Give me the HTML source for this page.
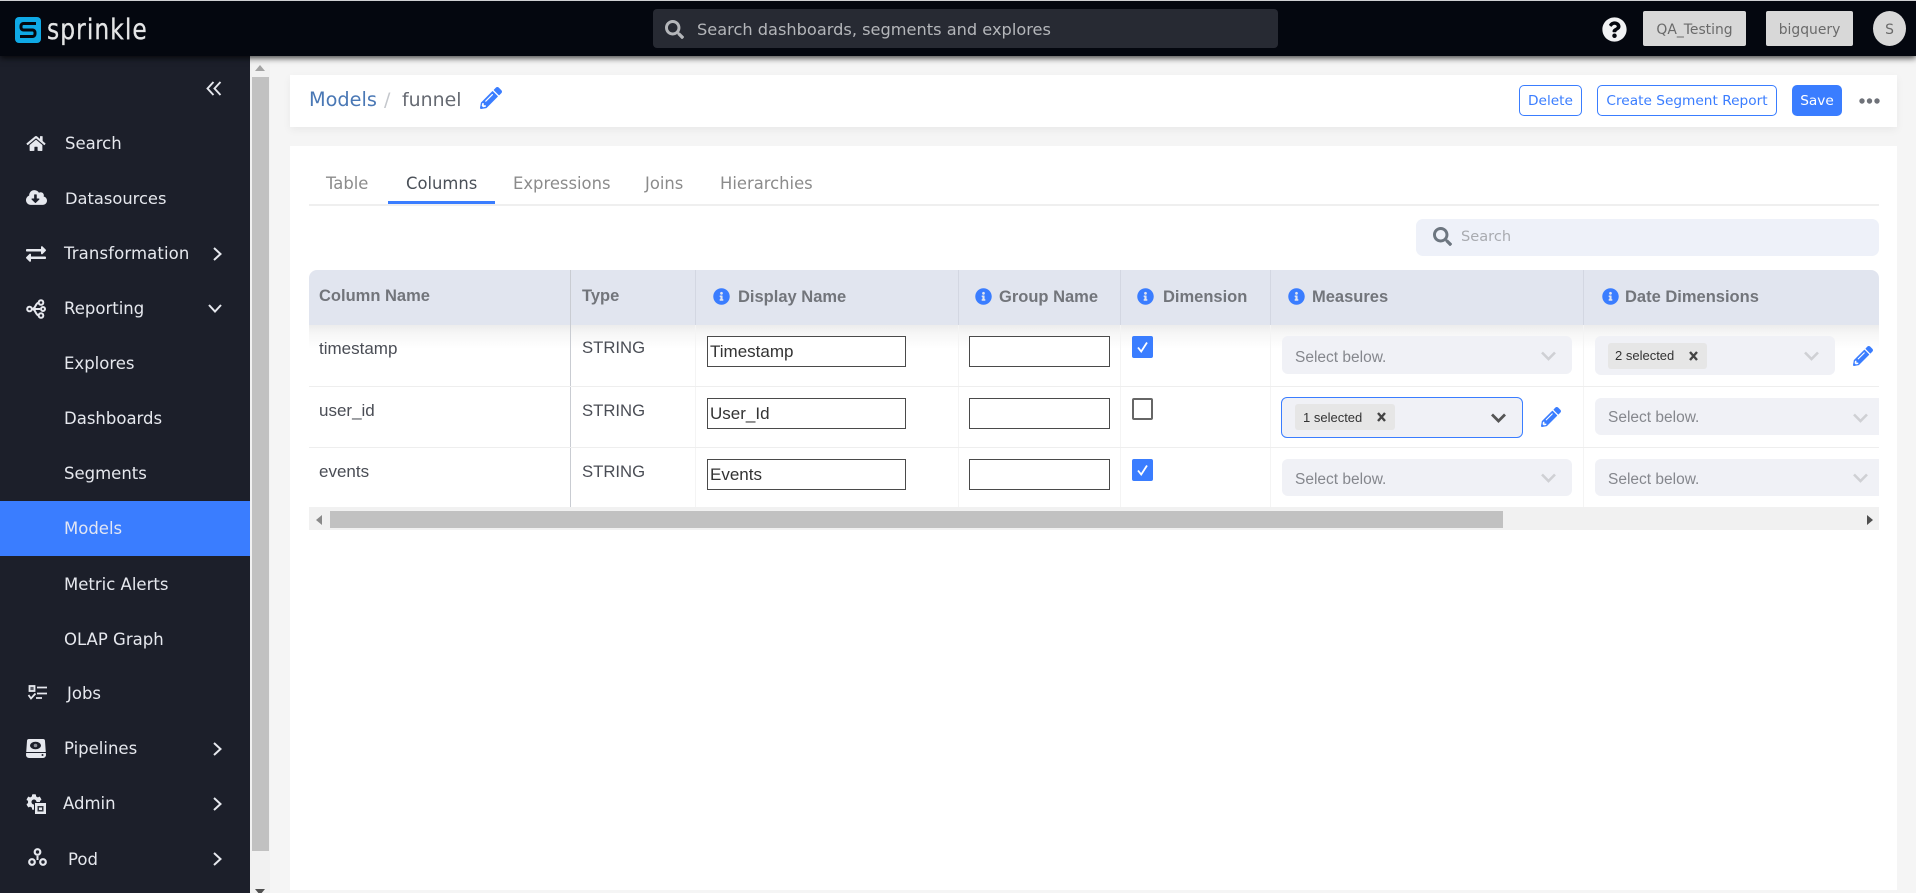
<!DOCTYPE html>
<html lang="en"><head><meta charset="utf-8"><title>Sprinkle - Models</title>
<style>
*{box-sizing:border-box}
html,body{margin:0;padding:0;width:1916px;height:893px;overflow:hidden;background:#f5f5f5;font-family:"Liberation Sans",sans-serif}
.a{position:absolute}
.t{position:absolute;white-space:nowrap;line-height:24px;height:24px}
.d{font-family:"DejaVu Sans",sans-serif}
svg{position:absolute;display:block;overflow:visible}
.nav{color:#e6e8ee;font-size:16.5px;font-family:"DejaVu Sans",sans-serif}
.th{font-weight:bold;font-size:16.5px;color:#72757b}
.td{font-size:17px;color:#4a4d55}
.in{position:absolute;width:199px;height:31px;background:#fff;border:1.5px solid #4a4a4a;font-size:17px;color:#333;line-height:30px;padding-left:2px;white-space:nowrap}
.sel{position:absolute;background:#f0f1f6;border-radius:6px}
.ph{font-size:15.5px;color:#85878d}
.chip{position:absolute;background:#e6e6e6;border-radius:3px;height:26px;font-size:13px;color:#333;line-height:26px;white-space:nowrap}
.btn{position:absolute;height:31px;border:1px solid #3a7dff;border-radius:5px;color:#3a7dff;font-family:"DejaVu Sans",sans-serif;font-size:13.7px;line-height:31px;text-align:center;background:#fff;white-space:nowrap}
.gbtn{position:absolute;top:11px;height:35px;background:#d8d8d8;border-radius:2px;color:#6a6a6a;font-family:"DejaVu Sans",sans-serif;font-size:13.9px;line-height:38px;text-align:center}
.tab{font-family:"DejaVu Sans",sans-serif;font-size:16.4px;color:#8b8b8b}
</style></head><body>

<svg width="0" height="0" style="position:absolute"><defs>
<path id="pen" d="M497.9 142.1l-46.1 46.1c-4.7 4.7-12.3 4.7-17 0l-111-111c-4.7-4.7-4.7-12.3 0-17l46.1-46.1c18.7-18.7 49.1-18.7 67.9 0l60.1 60.1c18.8 18.7 18.8 49.1 0 67.9zM284.2 99.8L21.6 362.4.4 483.9c-2.9 16.4 11.4 30.6 27.8 27.8l121.5-21.3 262.6-262.6c4.7-4.7 4.7-12.3 0-17l-111-111c-4.8-4.7-12.4-4.7-17.1 0zM124.1 339.9c-5.5-5.5-5.5-14.3 0-19.8l154-154c5.5-5.5 14.3-5.5 19.8 0s5.5 14.3 0 19.8l-154 154c-5.5 5.5-14.3 5.5-19.8 0zM88 424h48v36.3l-64.5 11.3-31.1-31.1L51.7 376H88v48z"/>
<path id="info" d="M256 8C119 8 8 119.1 8 256c0 137 111 248 248 248s248-111 248-248C504 119.1 393 8 256 8zm0 110c23.2 0 42 18.8 42 42s-18.8 42-42 42-42-18.8-42-42 18.8-42 42-42zm56 254c0 6.6-5.4 12-12 12h-88c-6.6 0-12-5.4-12-12v-24c0-6.6 5.4-12 12-12h12v-64h-12c-6.6 0-12-5.4-12-12v-24c0-6.6 5.4-12 12-12h64c6.6 0 12 5.4 12 12v100h12c6.6 0 12 5.4 12 12v24z"/>
<path id="srch" d="M505 442.7L405.3 343c-4.5-4.5-10.6-7-17-7H372c27.6-35.3 44-79.7 44-128C416 93.1 322.9 0 208 0S0 93.1 0 208s93.1 208 208 208c48.3 0 92.7-16.4 128-44v16.3c0 6.4 2.5 12.5 7 17l99.7 99.7c9.4 9.4 24.6 9.4 33.9 0l28.3-28.3c9.4-9.4 9.4-24.6.1-34zM208 336c-70.7 0-128-57.2-128-128 0-70.7 57.2-128 128-128 70.7 0 128 57.2 128 128 0 70.7-57.2 128-128 128z"/>
</defs></svg>

<!-- main content -->
<div class="a" style="left:290px;top:75px;width:1607px;height:52px;background:#fff;box-shadow:0 3px 8px rgba(0,0,0,.05)"></div>
<div class="t d" style="left:309px;top:88px;font-size:19.3px;color:#4a78b5">Models</div>
<div class="t d" style="left:384px;top:88px;font-size:19px;color:#c4c7cc">/</div>
<div class="t d" style="left:402px;top:88px;font-size:18.9px;color:#666a72">funnel</div>
<svg style="left:480px;top:87px" width="22" height="22" viewBox="0 0 512 512" fill="#3a7dff"><use href="#pen"/></svg>

<div class="btn" style="left:1519px;top:85px;width:63px">Delete</div>
<div class="btn" style="left:1597px;top:85px;width:180px">Create Segment Report</div>
<div class="btn" style="left:1792px;top:85px;width:50px;background:#3a7dff;color:#fff">Save</div>
<svg style="left:1859px;top:97px" width="21" height="8" fill="#6f7279"><circle cx="3" cy="4" r="2.7"/><circle cx="10.5" cy="4" r="2.7"/><circle cx="18" cy="4" r="2.7"/></svg>

<div class="a" style="left:290px;top:146px;width:1607px;height:744px;background:#fff"></div>

<div class="t tab" style="left:326px;top:172px">Table</div>
<div class="t tab" style="left:406px;top:172px;color:#4a5058">Columns</div>
<div class="t tab" style="left:513px;top:172px">Expressions</div>
<div class="t tab" style="left:645px;top:172px">Joins</div>
<div class="t tab" style="left:720px;top:172px">Hierarchies</div>
<div class="a" style="left:309px;top:204px;width:1570px;height:2px;background:#efefef"></div>
<div class="a" style="left:388px;top:201px;width:107px;height:3px;background:#3a7dff"></div>

<div class="a" style="left:1416px;top:219px;width:463px;height:37px;background:#eef1f9;border-radius:7px"></div>
<svg style="left:1433px;top:227px" width="19" height="19" viewBox="0 0 512 512" fill="#6d7680"><use href="#srch"/></svg>
<div class="t d" style="left:1461px;top:225px;font-size:14.6px;color:#a9abb0">Search</div>

<!-- table header -->
<div class="a" style="left:309px;top:270px;width:1570px;height:55px;background:#e1e5ef;border-radius:8px 8px 0 0"></div>
<div class="a" style="left:309px;top:325px;width:1570px;height:182px;background:linear-gradient(#ececec 0,#f6f6f6 8px,#ffffff 24px)"></div>

<div class="a" style="left:570px;top:270px;width:1px;height:237px;background:#c9ccd2"></div>
<div class="a" style="left:695px;top:270px;width:1px;height:55px;background:#d3d7e2"></div>
<div class="a" style="left:958px;top:270px;width:1px;height:55px;background:#d3d7e2"></div>
<div class="a" style="left:1120px;top:270px;width:1px;height:55px;background:#d3d7e2"></div>
<div class="a" style="left:1270px;top:270px;width:1px;height:55px;background:#d3d7e2"></div>
<div class="a" style="left:1583px;top:270px;width:1px;height:55px;background:#d3d7e2"></div>
<div class="a" style="left:695px;top:325px;width:1px;height:182px;background:#f4f4f4"></div>
<div class="a" style="left:958px;top:325px;width:1px;height:182px;background:#f4f4f4"></div>
<div class="a" style="left:1120px;top:325px;width:1px;height:182px;background:#f4f4f4"></div>
<div class="a" style="left:1270px;top:325px;width:1px;height:182px;background:#f4f4f4"></div>
<div class="a" style="left:1583px;top:325px;width:1px;height:182px;background:#f4f4f4"></div>
<div class="a" style="left:309px;top:386px;width:1570px;height:1px;background:#eeeeee"></div>
<div class="a" style="left:309px;top:447px;width:1570px;height:1px;background:#eeeeee"></div>

<div class="t th" style="left:319px;top:284px">Column Name</div>
<div class="t th" style="left:582px;top:284px">Type</div>
<svg style="left:713px;top:288px" width="17" height="17" viewBox="0 0 512 512" fill="#3a7dff"><use href="#info"/></svg>
<div class="t th" style="left:738px;top:285px">Display Name</div>
<svg style="left:975px;top:288px" width="17" height="17" viewBox="0 0 512 512" fill="#3a7dff"><use href="#info"/></svg>
<div class="t th" style="left:999px;top:285px">Group Name</div>
<svg style="left:1137px;top:288px" width="17" height="17" viewBox="0 0 512 512" fill="#3a7dff"><use href="#info"/></svg>
<div class="t th" style="left:1163px;top:285px">Dimension</div>
<svg style="left:1288px;top:288px" width="17" height="17" viewBox="0 0 512 512" fill="#3a7dff"><use href="#info"/></svg>
<div class="t th" style="left:1312px;top:285px">Measures</div>
<svg style="left:1602px;top:288px" width="17" height="17" viewBox="0 0 512 512" fill="#3a7dff"><use href="#info"/></svg>
<div class="t th" style="left:1625px;top:285px">Date Dimensions</div>

<!-- rows -->
<div class="t td" style="left:319px;top:337px">timestamp</div>
<div class="t td" style="left:582px;top:336px;font-size:16.7px">STRING</div>
<div class="in" style="left:707px;top:336px">Timestamp</div>
<div class="in" style="left:969px;top:336px;width:141px"></div>
<div class="a" style="left:1132px;top:336px;width:21px;height:22px;background:#3a7dff;border-radius:2px"></div>
<svg style="left:1132px;top:336px" width="21" height="22" fill="none" stroke="#fff" stroke-width="1.8"><path d="M6 11.5l3.2 4L15 6.5"/></svg>

<div class="t td" style="left:319px;top:399px">user_id</div>
<div class="t td" style="left:582px;top:399px;font-size:16.7px">STRING</div>
<div class="in" style="left:707px;top:398px">User_Id</div>
<div class="in" style="left:969px;top:398px;width:141px"></div>
<div class="a" style="left:1132px;top:398px;width:21px;height:22px;background:#fff;border:2px solid #666;border-radius:2px"></div>

<div class="t td" style="left:319px;top:460px">events</div>
<div class="t td" style="left:582px;top:460px;font-size:16.7px">STRING</div>
<div class="in" style="left:707px;top:459px">Events</div>
<div class="in" style="left:969px;top:459px;width:141px"></div>
<div class="a" style="left:1132px;top:459px;width:21px;height:22px;background:#3a7dff;border-radius:2px"></div>
<svg style="left:1132px;top:459px" width="21" height="22" fill="none" stroke="#fff" stroke-width="1.8"><path d="M6 11.5l3.2 4L15 6.5"/></svg>

<!-- measures selects -->
<div class="sel" style="left:1282px;top:336px;width:290px;height:38px"></div>
<div class="t ph" style="left:1295px;top:346px">Select below.</div>
<svg style="left:1541px;top:351px" width="15" height="10" fill="none" stroke="#cfd0d4" stroke-width="2.6"><path d="M1 1.5l6.5 6.5L14 1.5"/></svg>

<div class="sel" style="left:1281px;top:397px;width:242px;height:41px;border:1.5px solid #3a7dff"></div>
<div class="chip" style="left:1295px;top:404px;width:100px;padding-left:8px;line-height:28px">1 selected</div>
<svg style="left:1377px;top:412px" width="9" height="10" fill="none" stroke="#444" stroke-width="2.4"><path d="M1 1l7 8M8 1L1 9"/></svg>
<svg style="left:1491px;top:413px" width="15" height="10" fill="none" stroke="#555" stroke-width="2.8"><path d="M1 1.5l6.5 6.5L14 1.5"/></svg>
<svg style="left:1541px;top:407px" width="20" height="20" viewBox="0 0 512 512" fill="#3a7dff"><use href="#pen"/></svg>

<div class="sel" style="left:1282px;top:459px;width:290px;height:37px"></div>
<div class="t ph" style="left:1295px;top:468px">Select below.</div>
<svg style="left:1541px;top:473px" width="15" height="10" fill="none" stroke="#cfd0d4" stroke-width="2.6"><path d="M1 1.5l6.5 6.5L14 1.5"/></svg>

<!-- date selects -->
<div class="sel" style="left:1595px;top:336px;width:240px;height:39px"></div>
<div class="chip" style="left:1608px;top:343px;width:99px;padding-left:7px">2 selected</div>
<svg style="left:1689px;top:351px" width="9" height="10" fill="none" stroke="#444" stroke-width="2.4"><path d="M1 1l7 8M8 1L1 9"/></svg>
<svg style="left:1804px;top:351px" width="15" height="10" fill="none" stroke="#cfd0d4" stroke-width="2.6"><path d="M1 1.5l6.5 6.5L14 1.5"/></svg>
<svg style="left:1853px;top:346px" width="20" height="20" viewBox="0 0 512 512" fill="#3a7dff"><use href="#pen"/></svg>

<div class="sel" style="left:1595px;top:398px;width:284px;height:37px;border-radius:6px 0 0 6px"></div>
<div class="t ph" style="left:1608px;top:406px">Select below.</div>
<svg style="left:1853px;top:413px" width="15" height="10" fill="none" stroke="#cfd0d4" stroke-width="2.6"><path d="M1 1.5l6.5 6.5L14 1.5"/></svg>

<div class="sel" style="left:1595px;top:459px;width:284px;height:37px;border-radius:6px 0 0 6px"></div>
<div class="t ph" style="left:1608px;top:468px">Select below.</div>
<svg style="left:1853px;top:473px" width="15" height="10" fill="none" stroke="#cfd0d4" stroke-width="2.6"><path d="M1 1.5l6.5 6.5L14 1.5"/></svg>

<!-- h scrollbar -->
<div class="a" style="left:309px;top:507px;width:1570px;height:23px;background:#f1f1f1"></div>
<div class="a" style="left:330px;top:511px;width:1173px;height:17px;background:#c1c1c1"></div>
<svg style="left:316px;top:515px" width="7" height="10" fill="#8a8a8a"><path d="M6 0v10L0 5z"/></svg>
<svg style="left:1866px;top:515px" width="7" height="10" fill="#505050"><path d="M1 0v10L7 5z"/></svg>

<!-- v scrollbar -->
<div class="a" style="left:250px;top:56px;width:20px;height:837px;background:#f1f1f1"></div>
<div class="a" style="left:252px;top:77px;width:17px;height:774px;background:#c1c1c1"></div>
<svg style="left:255px;top:65px" width="10" height="6" fill="#a3a3a3"><path d="M5 0l5 6H0z"/></svg>
<svg style="left:255px;top:889px" width="10" height="4" fill="#505050"><path d="M0 0h10L5 6z"/></svg>

<!-- sidebar -->
<div class="a" style="left:0;top:56px;width:250px;height:837px;background:#1c1f2a"></div>
<div class="a" style="left:0;top:501px;width:250px;height:55px;background:#3a7dff"></div>
<svg style="left:206px;top:81px" width="16" height="15" fill="none" stroke="#e6e8ee" stroke-width="1.9"><path d="M7.5 1L1.5 7.5l6 6.5M14.5 1L8.5 7.5l6 6.5"/></svg>

<div class="t nav" style="left:65px;top:132px">Search</div>
<div class="t nav" style="left:65px;top:187px;font-size:16.3px">Datasources</div>
<div class="t nav" style="left:64px;top:242px;letter-spacing:.12px">Transformation</div>
<div class="t nav" style="left:64px;top:297px">Reporting</div>
<div class="t nav" style="left:64px;top:352px">Explores</div>
<div class="t nav" style="left:64px;top:407px">Dashboards</div>
<div class="t nav" style="left:64px;top:462px">Segments</div>
<div class="t nav" style="left:64px;top:517px;color:#e2e6f4">Models</div>
<div class="t nav" style="left:64px;top:573px">Metric Alerts</div>
<div class="t nav" style="left:64px;top:628px">OLAP Graph</div>
<div class="t nav" style="left:67px;top:682px">Jobs</div>
<div class="t nav" style="left:64px;top:737px">Pipelines</div>
<div class="t nav" style="left:63px;top:792px">Admin</div>
<div class="t nav" style="left:68px;top:848px">Pod</div>

<svg style="left:213px;top:247px" width="9" height="14" fill="none" stroke="#e6e8ee" stroke-width="2"><path d="M1 1l6.5 6L1 13"/></svg>
<svg style="left:208px;top:304px" width="14" height="9" fill="none" stroke="#e6e8ee" stroke-width="2"><path d="M1 1l6 6.5L13 1"/></svg>
<svg style="left:213px;top:742px" width="9" height="14" fill="none" stroke="#e6e8ee" stroke-width="2"><path d="M1 1l6.5 6L1 13"/></svg>
<svg style="left:213px;top:797px" width="9" height="14" fill="none" stroke="#e6e8ee" stroke-width="2"><path d="M1 1l6.5 6L1 13"/></svg>
<svg style="left:213px;top:852px" width="9" height="14" fill="none" stroke="#e6e8ee" stroke-width="2"><path d="M1 1l6.5 6L1 13"/></svg>

<!-- nav icons -->
<svg style="left:26px;top:135px" width="20" height="17" viewBox="0 0 576 512" fill="#e6e8ee"><path d="M280.37 148.26L96 300.11V464a16 16 0 0 0 16 16l112.06-.29a16 16 0 0 0 15.92-16V368a16 16 0 0 1 16-16h64a16 16 0 0 1 16 16v95.64a16 16 0 0 0 16 16.05L464 480a16 16 0 0 0 16-16V300L295.67 148.26a12.19 12.19 0 0 0-15.3 0zM571.6 251.47L488 182.56V44.05a12 12 0 0 0-12-12h-56a12 12 0 0 0-12 12v72.61L318.47 43a48 48 0 0 0-61 0L4.34 251.47a12 12 0 0 0-1.6 16.9l25.5 31A12 12 0 0 0 45.15 301l235.22-193.74a12.19 12.19 0 0 1 15.3 0L530.9 301a12 12 0 0 0 16.9-1.6l25.5-31a12 12 0 0 0-1.7-16.93z"/></svg>
<svg style="left:26px;top:189px" width="21" height="17" viewBox="0 0 640 512" fill="#e6e8ee"><path d="M537.6 226.6c4.1-10.7 6.4-22.4 6.4-34.6 0-53-43-96-96-96-19.7 0-38.1 6-53.3 16.2C367 64.2 315.3 32 256 32c-88.4 0-160 71.6-160 160 0 2.7.1 5.4.2 8.1C40.2 219.8 0 273.2 0 336c0 79.5 64.5 144 144 144h368c70.7 0 128-57.3 128-128 0-61.9-44-113.6-102.4-125.4zm-132.9 88.7L299.3 420.7c-6.2 6.2-16.4 6.2-22.6 0L171.3 315.3c-10.1-10.1-2.9-27.3 11.3-27.3H248V176c0-8.8 7.2-16 16-16h48c8.8 0 16 7.2 16 16v112h65.4c14.2 0 21.4 17.2 11.3 27.3z"/></svg>
<svg style="left:26px;top:244px" width="20" height="20" viewBox="0 0 512 512" fill="#e6e8ee"><path d="M0 168v-16c0-13.255 10.745-24 24-24h360V80c0-21.367 25.899-32.042 40.971-16.971l80 80c9.372 9.373 9.372 24.569 0 33.941l-80 80C409.956 271.982 384 261.456 384 240v-48H24c-13.255 0-24-10.745-24-24zm488 152H128v-48c0-21.314-25.862-32.08-40.971-16.971l-80 80c-9.372 9.373-9.372 24.569 0 33.941l80 80C102.057 463.997 128 453.437 128 432v-48h360c13.255 0 24-10.745 24-24v-16c0-13.255-10.745-24-24-24z"/></svg>
<svg style="left:26px;top:299px" width="20" height="20" fill="none" stroke="#e6e8ee" stroke-width="2"><path d="M6 10h8M6 10c4 0 3-6 7-6.500M6 10c4 0 3 6 7 6.500"/><circle cx="3.500" cy="10" r="2.300"/><circle cx="15" cy="3.500" r="2.300"/><circle cx="15" cy="16.500" r="2.300"/><circle cx="17" cy="10" r="2"/></svg>
<svg style="left:28px;top:685px" width="19" height="15" fill="none" stroke="#e6e8ee" stroke-width="1.800"><rect x="1.500" y="1" width="5" height="5" fill="#e6e8ee" fill-opacity=".3"/><path d="M9 2.500h10M9 8.500h10M0.500 10l2.500 3.500 4.500-5M8 13h6"/></svg>
<svg style="left:26px;top:739px" width="20" height="19" viewBox="0 0 20 19"><path d="M3 0h14a2 2 0 0 1 2 2l1 14a3 3 0 0 1-3 3H3a3 3 0 0 1-3-3L1 2a2 2 0 0 1 2-2z" fill="#e6e8ee"/><path d="M0 13.500h20" stroke="#1c1f2a" stroke-width="1"/><ellipse cx="9.500" cy="6.500" rx="5.500" ry="3.800" fill="#1c1f2a"/><circle cx="9.500" cy="6.500" r="1.800" fill="#8c8f98"/><circle cx="16.500" cy="16" r="1" fill="#1c1f2a"/></svg>
<svg style="left:26px;top:794px" width="16" height="16" viewBox="0 0 512 512" fill="#e6e8ee"><path d="M487.4 315.7l-42.6-24.6c4.3-23.2 4.3-47 0-70.2l42.6-24.6c4.9-2.8 7.1-8.6 5.5-14-11.1-35.6-30-67.8-54.7-94.6-3.8-4.1-10-5.1-14.8-2.3L380.8 110c-17.9-15.4-38.5-27.3-60.8-35.1V25.8c0-5.6-3.9-10.5-9.4-11.7-36.7-8.2-74.3-7.8-109.2 0-5.5 1.2-9.4 6.1-9.4 11.7V75c-22.2 7.9-42.8 19.8-60.8 35.1L88.7 85.5c-4.9-2.8-11-1.9-14.8 2.3-24.7 26.7-43.6 58.9-54.7 94.6-1.7 5.4.6 11.2 5.5 14L67.3 221c-4.3 23.2-4.3 47 0 70.2l-42.6 24.6c-4.9 2.8-7.1 8.6-5.500 14 11.1 35.6 30 67.8 54.7 94.6 3.8 4.1 10 5.1 14.8 2.3l42.6-24.6c17.9 15.4 38.5 27.3 60.8 35.1v49.2c0 5.6 3.9 10.5 9.4 11.7 36.7 8.2 74.3 7.8 109.2 0 5.5-1.2 9.4-6.1 9.4-11.7v-49.2c22.2-7.9 42.8-19.8 60.8-35.1l42.6 24.6c4.9 2.8 11 1.9 14.8-2.3 24.7-26.7 43.6-58.9 54.7-94.6 1.5-5.5-.7-11.3-5.6-14.1zM256 336c-44.1 0-80-35.9-80-80s35.9-80 80-80 80 35.9 80 80-35.9 80-80 80z"/></svg>
<svg style="left:35px;top:803px" width="11" height="11" viewBox="0 0 11 11"><rect x="-1" y="-1" width="13" height="13" fill="#1c1f2a"/><rect width="11" height="11" fill="#e6e8ee"/><rect x="2.500" y="3" width="6" height="5.500" fill="#33363f"/><rect x="4" y="4.500" width="3" height="2.500" fill="#e6e8ee"/></svg>
<svg style="left:28px;top:848px" width="19" height="18" fill="none" stroke="#e6e8ee" stroke-width="2.200"><circle cx="9.500" cy="4" r="2.800"/><circle cx="4" cy="14" r="2.800"/><circle cx="15" cy="14" r="2.800"/><path d="M9.500 8v4" stroke-width="2"/></svg>

<!-- top bar -->
<div class="a" style="left:0;top:0;width:1916px;height:56px;background:#04070f;border-top:1px solid #cfd0d2;box-shadow:0 2px 6px rgba(0,0,0,.75)"></div>
<svg style="left:15px;top:17px" width="26" height="26" viewBox="0 0 26 26"><rect width="26" height="26" rx="4" fill="#0fa9e6"/><path d="M21 6.500H8.500a2.500 2.500 0 0 0-2.500 2.500v1.500A2.500 2.500 0 0 0 8.500 13h9a2.500 2.500 0 0 1 2.500 2.500V17a2.500 2.500 0 0 1-2.500 2.500H5" fill="none" stroke="#04070f" stroke-width="3"/></svg>
<div class="t" style="left:47px;top:15px;font-size:28.5px;line-height:30px;height:30px;color:#e4e5e6;letter-spacing:1.3px;font-family:'DejaVu Sans',sans-serif;font-weight:normal;transform-origin:left center;transform:scaleX(.82);-webkit-text-stroke:.3px #e4e5e6">sprinkle</div>

<div class="a" style="left:653px;top:9px;width:625px;height:39px;background:#272a33;border-radius:4px"></div>
<svg style="left:665px;top:20px" width="19" height="19" viewBox="0 0 512 512" fill="#b4b6ba"><use href="#srch"/></svg>
<div class="t d" style="left:697px;top:18px;font-size:16.2px;color:#b4b6ba">Search dashboards, segments and explores</div>

<svg style="left:1602px;top:17px" width="25" height="25" viewBox="0 0 512 512" fill="#f1f2f4"><path d="M504 256c0 136.997-111.043 248-248 248S8 392.997 8 256C8 119.083 119.043 8 256 8s248 111.083 248 248zM262.655 90c-54.497 0-89.255 22.957-116.549 63.758-3.536 5.286-2.353 12.415 2.715 16.258l34.699 26.31c5.205 3.947 12.621 3.008 16.665-2.122 17.864-22.658 30.113-35.797 57.303-35.797 20.429 0 45.698 13.148 45.698 32.958 0 14.976-12.363 22.667-32.534 33.976C247.128 238.528 216 254.941 216 296v4c0 6.627 5.373 12 12 12h56c6.627 0 12-5.373 12-12v-1.333c0-28.462 83.186-29.647 83.186-106.667 0-58.002-60.165-102-116.531-102zM256 338c-25.365 0-46 20.635-46 46 0 25.364 20.635 46 46 46s46-20.636 46-46c0-25.365-20.635-46-46-46z"/></svg>
<div class="gbtn" style="left:1643px;width:103px">QA_Testing</div>
<div class="gbtn" style="left:1766px;width:87px">bigquery</div>
<div class="gbtn" style="left:1873px;width:33px;border-radius:50%">S</div>

</body></html>
